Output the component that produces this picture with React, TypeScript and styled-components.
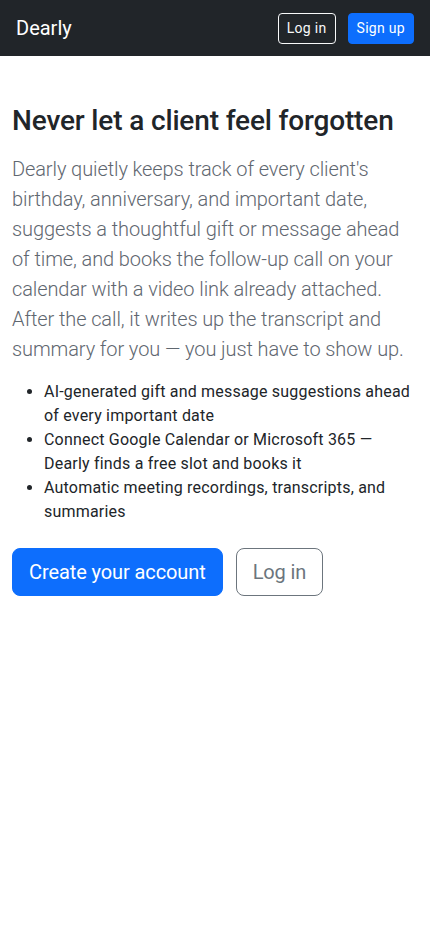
import React from "react";
import styled, { createGlobalStyle } from "styled-components";

const Global = createGlobalStyle`
  html, body { margin: 0; padding: 0; background: #fff; }
  body {
    font-family: Roboto, "Noto Sans", "Liberation Sans", sans-serif;
    color: #212529;
    font-size: 16px;
    line-height: 1.5;
    -webkit-font-smoothing: antialiased;
  }
  * { box-sizing: border-box; }
`;

const Navbar = styled.nav`
  height: 56px;
  background: #212529;
  display: flex;
  align-items: center;
  justify-content: space-between;
  padding: 0 16px;
`;

const Brand = styled.a`
  color: #fff;
  font-size: 20px;
  line-height: 30px;
  text-decoration: none;
`;

const NavActions = styled.div`
  display: flex;
  gap: 12px;
`;

const Button = styled.a<{ $variant: "primary" | "outlineLight" | "outlineSecondary"; $size: "sm" | "lg" }>`
  display: inline-flex;
  align-items: center;
  justify-content: center;
  text-decoration: none;
  border: 1px solid transparent;
  font-weight: 400;
  ${({ $size }) =>
    $size === "sm"
      ? `height: 31px; padding: 0 8px; font-size: 14px; border-radius: 4px; letter-spacing: 0.3px;`
      : `height: 48px; padding: 0 16px; font-size: 20px; border-radius: 8px; letter-spacing: -0.1px;`}
  ${({ $variant }) =>
    $variant === "primary"
      ? `background: #0d6efd; border-color: #0d6efd; color: #fff;`
      : $variant === "outlineLight"
      ? `background: transparent; border-color: #f8f9fa; color: #f8f9fa;`
      : `background: transparent; border-color: #6c757d; color: #6c757d;`}
`;

const Main = styled.main`
  padding: 48px 12px;
`;

const Title = styled.h1`
  margin: 0 0 16px;
  font-size: 28px;
  line-height: 34px;
  font-weight: 500;
  color: #212529;
  letter-spacing: -0.15px;
`;

const Lead = styled.p`
  margin: 0 0 16px;
  font-size: 20px;
  line-height: 30px;
  font-weight: 300;
  color: #5f6770;
  letter-spacing: -0.1px;
`;

const Features = styled.ul`
  margin: 0 0 24px;
  padding-left: 32px;
  font-size: 16px;
  line-height: 24px;
  color: #212529;
  letter-spacing: 0.2px;
`;

const Actions = styled.div`
  display: flex;
  gap: 13px;
`;

export default function App() {
  return (
    <>
      <Global />
      <Navbar>
        <Brand href="#">Dearly</Brand>
        <NavActions>
          <Button href="#" $variant="outlineLight" $size="sm">Log in</Button>
          <Button href="#" $variant="primary" $size="sm">Sign up</Button>
        </NavActions>
      </Navbar>
      <Main>
        <Title>Never let a client feel forgotten</Title>
        <Lead>
          Dearly quietly keeps track of every client's birthday, anniversary, and important date,
          suggests a thoughtful gift or message ahead of time, and books the follow-up call on your
          calendar with a video link already attached. After the call, it writes up the transcript and
          summary for you — you just have to show up.
        </Lead>
        <Features>
          <li>AI-generated gift and message suggestions ahead of every important date</li>
          <li>Connect Google Calendar or Microsoft 365 — Dearly finds a free slot and books it</li>
          <li>Automatic meeting recordings, transcripts, and summaries</li>
        </Features>
        <Actions>
          <Button href="#" $variant="primary" $size="lg">Create your account</Button>
          <Button href="#" $variant="outlineSecondary" $size="lg">Log in</Button>
        </Actions>
      </Main>
    </>
  );
}
